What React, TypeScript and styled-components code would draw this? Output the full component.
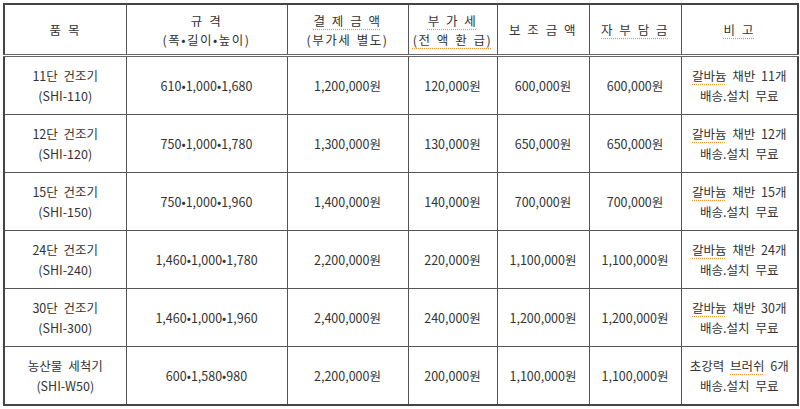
import React from "react";
import styled, { createGlobalStyle } from "styled-components";

const GlobalStyle = createGlobalStyle`
  html, body {
    margin: 0;
    padding: 0;
    background: #ffffff;
  }
`;

const Page = styled.div`
  padding: 3px 3px 0 3px;
  font-family: "Noto Sans CJK KR", "Noto Sans", sans-serif;
  color: #333;
`;

const Table = styled.table`
  width: 794px;
  border-collapse: collapse;
  table-layout: fixed;
  border: 2px solid #444;
`;

const HeadCell = styled.th`
  height: 49px;
  border: 1px solid #555;
  border-bottom: 3px double #666;
  font-weight: 400;
  font-size: 12.5px;
  line-height: 19px;
  text-align: center;
  vertical-align: middle;
  padding: 0;
  letter-spacing: 1.5px;
  word-spacing: 1px;
  white-space: nowrap;
`;

const Cell = styled.td`
  height: 57px;
  border: 1px solid #555;
  font-size: 12.5px;
  line-height: 20px;
  text-align: center;
  vertical-align: middle;
  padding: 0;
  white-space: nowrap;
  word-spacing: 3px;
`;

const Spell = styled.span`
  text-decoration: underline dotted #e89a3c;
  text-underline-offset: 3px;
`;

type Row = {
  name: string;
  model: string;
  size: string;
  price: string;
  vat: string;
  subsidy: string;
  self: string;
  note: React.ReactNode;
};

const rows: Row[] = [
  { name: "11단 건조기", model: "(SHI-110)", size: "610•1,000•1,680", price: "1,200,000원", vat: "120,000원", subsidy: "600,000원", self: "600,000원", note: <><Spell>갈바늄</Spell> 채반 11개</> },
  { name: "12단 건조기", model: "(SHI-120)", size: "750•1,000•1,780", price: "1,300,000원", vat: "130,000원", subsidy: "650,000원", self: "650,000원", note: <><Spell>갈바늄</Spell> 채반 12개</> },
  { name: "15단 건조기", model: "(SHI-150)", size: "750•1,000•1,960", price: "1,400,000원", vat: "140,000원", subsidy: "700,000원", self: "700,000원", note: <><Spell>갈바늄</Spell> 채반 15개</> },
  { name: "24단 건조기", model: "(SHI-240)", size: "1,460•1,000•1,780", price: "2,200,000원", vat: "220,000원", subsidy: "1,100,000원", self: "1,100,000원", note: <><Spell>갈바늄</Spell> 채반 24개</> },
  { name: "30단 건조기", model: "(SHI-300)", size: "1,460•1,000•1,960", price: "2,400,000원", vat: "240,000원", subsidy: "1,200,000원", self: "1,200,000원", note: <><Spell>갈바늄</Spell> 채반 30개</> },
  { name: "농산물 세척기", model: "(SHI-W50)", size: "600•1,580•980", price: "2,200,000원", vat: "200,000원", subsidy: "1,100,000원", self: "1,100,000원", note: <>초강력 <Spell>브러쉬</Spell> 6개</> },
];

const widths = [122, 161, 121, 89, 92, 92, 117];

export default function App() {
  return (
    <>
      <GlobalStyle />
      <Page>
        <Table>
          <colgroup>
            {widths.map((w, i) => (
              <col key={i} style={{ width: w }} />
            ))}
          </colgroup>
          <thead>
            <tr>
              <HeadCell>품 목</HeadCell>
              <HeadCell>규 격<br />(폭•길이•높이)</HeadCell>
              <HeadCell><Spell>결 제 금 액</Spell><br />(부가세 별도)</HeadCell>
              <HeadCell><Spell>부 가 세</Spell><br /><Spell>(전 액 환 급)</Spell></HeadCell>
              <HeadCell>보 조 금 액</HeadCell>
              <HeadCell><Spell>자 부 담 금</Spell></HeadCell>
              <HeadCell><Spell>비 고</Spell></HeadCell>
            </tr>
          </thead>
          <tbody>
            {rows.map((r) => (
              <tr key={r.model}>
                <Cell>{r.name}<br />{r.model}</Cell>
                <Cell>{r.size}</Cell>
                <Cell>{r.price}</Cell>
                <Cell>{r.vat}</Cell>
                <Cell>{r.subsidy}</Cell>
                <Cell>{r.self}</Cell>
                <Cell>{r.note}<br />배송.설치 무료</Cell>
              </tr>
            ))}
          </tbody>
        </Table>
      </Page>
    </>
  );
}
